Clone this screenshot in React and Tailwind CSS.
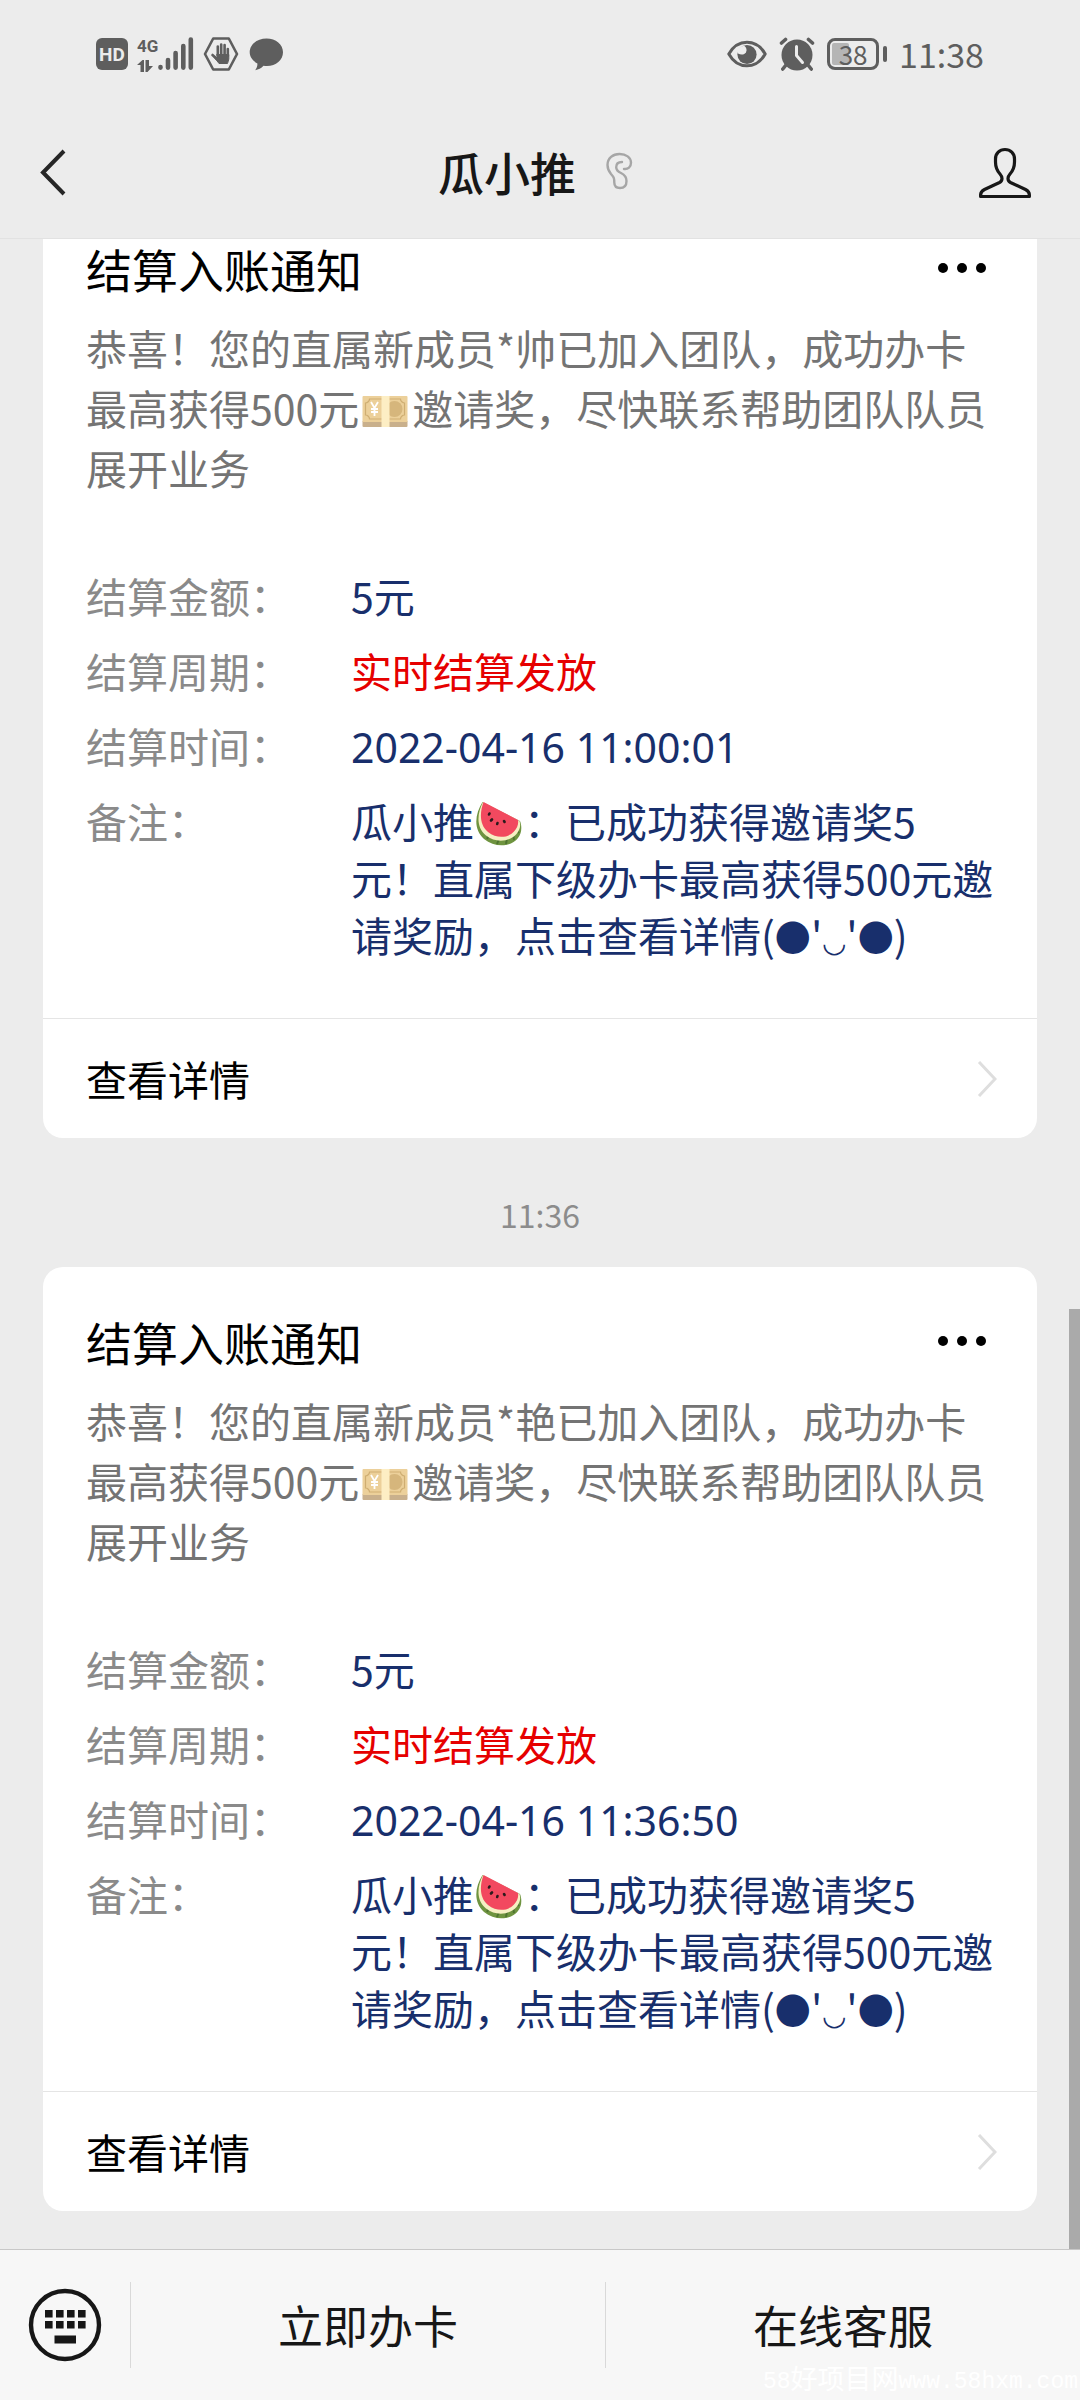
import React from 'react';

const notices = [
  { id: 1, member: '帅', amount: '5元', cycle: '实时结算发放', time: '2022-04-16 11:00:01' },
  { id: 2, member: '艳', amount: '5元', cycle: '实时结算发放', time: '2022-04-16 11:36:50', sentAt: '11:36' },
];

const SignalIcon = () => (
  <svg className="w-9 h-9" viewBox="0 0 36 36" fill="none" stroke="#5e5e5e" strokeWidth="4.6" strokeLinecap="round">
    <path d="M2.5 31v.6M10 24v7.6M17.6 17v14.6M25.3 10v21.6M32.8 3.5v28.1" />
  </svg>
);

const DataArrows = () => (
  <svg className="w-4 h-3" viewBox="0 0 16 12" fill="#5e5e5e">
    <path d="M3.500 12V5H0L5.500 0h1.500v12zM8.500 0H12v6h4l-5.500 6h-2z" />
  </svg>
);

const HandIcon = () => (
  <svg className="w-9 h-9" viewBox="0 0 36 36" fill="none" stroke="#5e5e5e" strokeLinecap="round" strokeLinejoin="round">
    <path strokeWidth="2.600" d="M10.200 2.500h15.600L34 18l-8.200 15.500H10.200L2 18z" />
    <path strokeWidth="2.600" d="M14.800 19V10.500M18.200 18V8.500M21.600 18V9M24.800 20v-7M14 23l-4.500-4" />
    <path fill="#5e5e5e" strokeWidth="1" d="M14 18.500h11.800V23c0 1.800-1 2.700-1.300 4.500h-8.500c-.8-1.500-4-4.500-5.500-7l3.500 1z" />
  </svg>
);

const BubbleIcon = () => (
  <svg className="w-9 h-9" viewBox="0 0 36 36" fill="#5e5e5e">
    <path d="M18.500 2.500C28 2.500 35 8.500 35 16.300S28 30 19 30c-1.200 0-2.400-.1-3.500-.3-2.300 2.500-5 3.800-8.300 4.500 1.500-2 2.300-4 2.200-6.700C4.800 25 1.700 21 1.700 16.300 1.700 8.500 9 2.500 18.500 2.500z" />
  </svg>
);

const EyeIcon = () => (
  <svg className="w-10 h-7" viewBox="0 0 40 28" fill="none">
    <path stroke="#5e5e5e" strokeWidth="3" strokeLinejoin="round" d="M1.800 14C6 6.500 12.500 2.200 20 2.200S34 6.500 38.200 14C34 21.500 27.500 25.800 20 25.800S6 21.500 1.800 14z" />
    <circle cx="20" cy="14.500" r="9.600" fill="#5e5e5e" />
    <path fill="#ececec" d="M17 5.500c2.500 2 3.200 4.500 2 6.800-1.500 2.600-5 3-8 1.200L9 9z" />
  </svg>
);

const AlarmIcon = () => (
  <svg className="w-9 h-9" viewBox="0 0 36 36" fill="none" strokeLinecap="round">
    <circle cx="18" cy="19" r="15.500" fill="#5e5e5e" />
    <path stroke="#5e5e5e" strokeWidth="3.600" d="M2.500 7l4-3.500M33.500 7l-4-3.500M7 29l-3.200 4M29 29l3.200 4" />
    <path stroke="#ececec" strokeWidth="3" strokeLinejoin="round" d="M17.500 10.500v9l6 7" />
  </svg>
);

const StatusBar = () => (
  <div className="flex items-center justify-between h-[108px] pl-24 pr-24 text-[#5e5e5e]">
    <div className="flex items-center gap-[9px]">
      <span className="w-8 h-8 flex items-center justify-center rounded-md bg-[#5e5e5e] text-[#ececec] text-[19px] leading-none font-bold font-['Roboto',sans-serif]">HD</span>
      <div className="flex items-end">
        <div className="w-[21px] h-9 flex flex-col justify-between">
          <span className="text-[17px] leading-5 font-bold font-['Roboto',sans-serif]">4G</span>
          <DataArrows />
        </div>
        <SignalIcon />
      </div>
      <HandIcon />
      <BubbleIcon />
    </div>
    <div className="flex items-center gap-3">
      <EyeIcon />
      <AlarmIcon />
      <div className="flex items-center gap-1">
        <div className="relative flex items-center justify-center w-[52px] h-8 border-[3px] border-[#5e5e5e] rounded-lg">
          <span className="absolute left-0.5 inset-y-0.5 w-[17px] bg-[#b5b5b5] rounded-xs" />
          <span className="relative text-[26px] leading-none">38</span>
        </div>
        <span className="w-1 h-4 rounded-sm bg-[#5e5e5e]" />
      </div>
      <span className="text-[34px] leading-10">11:38</span>
    </div>
  </div>
);

const Header = () => (
  <header className="relative z-10 bg-[#ececec] border-b border-[#e2e2e2]">
    <StatusBar />
    <div className="flex items-center justify-between h-[130px] pl-10 pr-[46px]">
      <button type="button" aria-label="返回" className="w-14 h-14 flex items-center">
        <svg className="w-7 h-12" viewBox="4 0 28 48" fill="none" stroke="#262626" strokeWidth="4">
          <path d="M28 2L7 23.500L28 45" />
        </svg>
      </button>
      <div className="flex items-center gap-7 pb-1">
        <h1 className="text-[46px] leading-[60px] font-medium text-[#171717]">瓜小推</h1>
        <svg className="w-8 h-10" viewBox="0 0 32 40" fill="none" stroke="#a6a6a6" strokeWidth="2.400" strokeLinecap="round">
          <path d="M20 18c4 .5 7-2 7-6.200C27 6.500 22 3 15.500 3S3.500 7 3.500 14c0 4 1.300 6.300 3.500 9 3.200 3.500 3.300 4.500 3.300 8.500 0 3.700 2 5.500 5.700 5.500 4.200 0 6.500-2.500 6.500-7 0-4-2-6.300-5.500-8-3.500-1.600-4.800-3.200-4.800-5.800 0-3.200 2.300-5.200 5.800-5.200" />
        </svg>
      </div>
      <button type="button" aria-label="个人资料" className="w-14 h-14 flex items-center">
        <svg className="w-14 h-14" viewBox="2 0 56 56" fill="none" stroke="#171717" strokeWidth="3.200" strokeLinejoin="round">
          <path d="M29 4.500c-5.500 0-9.500 4-9.500 9.500v3c0 5 1.800 9 4.500 12 1.500 1.700 2 2.500 2 4.500s-.5 3-2.500 4L8.500 44.500C6 45.700 4.600 47.500 4.600 50v1.500H53.400V50c0-2.500-1.400-4.300-3.900-5.500L34.500 37.500c-2-1-2.500-2-2.500-4s.5-2.800 2-4.500c2.700-3 4.500-7 4.500-12v-3c0-5.500-4-9.500-9.500-9.500z" />
        </svg>
      </button>
    </div>
  </header>
);

const YenIcon = () => (
  <svg className="inline-block w-[46px] h-10 ml-[3px] mr-1 align-[-5px]" viewBox="0 0 45 40" role="img" aria-label="日元">
    <path fill="#c9b08c" d="M0 31h45v5a1 1 0 0 1-1 1H1a1 1 0 0 1-1-1z" />
    <rect y="6" width="45" height="26" rx="1" fill="#ecd09a" />
    <path fill="none" stroke="#cfae72" strokeWidth="1.200" d="M7 9h31c0 2 2 4 4 4v12c-2 0-4 2-4 4H7c0-2-2-4-4-4V13c2 0 4-2 4-4z" />
    <circle cx="32" cy="19" r="8" fill="#d6b67c" />
    <rect x="19" y="6" width="8" height="31" fill="#fdeec4" />
    <path fill="none" stroke="#fff" strokeWidth="1.800" d="M8.500 12l3.500 6 3.500-6M12 18v8M8.500 19h7M8.500 22h7" />
  </svg>
);

const MelonIcon = () => (
  <svg className="inline-block w-[46px] h-[46px] mx-0.5 align-[-9px]" viewBox="0 0 46 46" role="img" aria-label="西瓜">
    <path fill="#6f9440" d="M6.500 1C-1 13-3 28 8 38c11 9 27 8 34-1 4-5 4-12 2-17z" />
    <path fill="none" stroke="#4f7430" strokeWidth="2" d="M21 43l2-5M30 43l1-6M38 39l-1-6M43 32l-3-4M11 38l2-4" />
    <path fill="#f6efc3" d="M7 1C1 13 0 26 10 34.500c10 8 24 6 30.500-1.500 3.500-4 4.500-8.500 3-13z" />
    <path fill="#f2495f" d="M7.500 1C3.500 12 3.500 24 12 31c9 7 20 6 26-.500 3.300-3.500 4.700-7.500 4-11.500z" />
    <path fill="none" stroke="#2b1a1c" strokeWidth="2.600" strokeLinecap="round" d="M13.500 12.500l-.5 1M16 18.500l-1 1M21.500 22l-.3 1M28 20l.6 1" />
  </svg>
);

const Row = ({ label, children, valueClass }) => (
  <div className="flex">
    <dt className="w-[265px] shrink-0 text-[#8a8a8a]">{`${label}：`}</dt>
    <dd className={valueClass || 'text-[#182f6c]'}>{children}</dd>
  </div>
);

const NoticeCard = ({ notice }) => (
  <article className="bg-white rounded-[20px]">
    <div className="pt-11 pl-[43px] pr-[42px] pb-[55px]">
      <div className="flex items-center justify-between">
        <h2 className="text-[46px] leading-[60px] text-black">结算入账通知</h2>
        <button type="button" aria-label="更多" className="h-12 flex items-center gap-[9px] pr-[9px]">
          <span className="w-2.5 h-2.5 rounded-full bg-black" />
          <span className="w-2.5 h-2.5 rounded-full bg-black" />
          <span className="w-2.5 h-2.5 rounded-full bg-black" />
        </button>
      </div>
      <p className="mt-[19px] text-[41px] leading-[60px] text-[#747474]">
        {`恭喜！您的直属新成员*${notice.member}已加入团队，成功办卡最高获得500元`}
        <YenIcon />
        邀请奖，尽快联系帮助团队队员展开业务
      </p>
      <dl className="mt-[70px] flex flex-col gap-[18px] text-[41px] leading-[57px]">
        <Row label="结算金额">{notice.amount}</Row>
        <Row label="结算周期" valueClass="text-[#e60000]">{notice.cycle}</Row>
        <Row label="结算时间">
          <time className="leading-none font-['Noto_Sans',sans-serif]">{notice.time}</time>
        </Row>
        <Row label="备注">
          瓜小推
          <MelonIcon />
          ：已成功获得邀请奖5元！直属下级办卡最高获得500元邀请奖励，点击查看详情(
          <span className="text-[36px] leading-none">●</span>'
          <span className="text-[28px] leading-none">◡</span>'
          <span className="text-[36px] leading-none">●</span>)
        </Row>
      </dl>
    </div>
    <a href="#detail" className="flex items-center justify-between h-[120px] pl-[43px] pr-10 border-t border-[#e5e5e5] text-[41px] text-black">
      查看详情
      <svg className="w-5 h-9" viewBox="0 0 20 36" fill="none" stroke="#dedede" strokeWidth="3">
        <path d="M2 1l16 17L2 35" />
      </svg>
    </a>
  </article>
);

const KeyboardIcon = () => (
  <svg className="w-[74px] h-[74px]" viewBox="0 0 74 74" fill="#171717">
    <circle cx="37" cy="37" r="34" fill="none" stroke="#171717" strokeWidth="4.400" />
    <path d="M17 22h7.600v7.500H17zM28 22h7.600v7.500H28zM39 22h7.600v7.500H39zM50 22h7.600v7.500H50zM17 33h7.600v7.500H17zM28 33h7.600v7.500H28zM39 33h7.600v7.500H39zM50 33h7.600v7.500H50zM26.500 47.500h21.500v8H26.500z" />
  </svg>
);

const MenuBar = () => (
  <footer className="relative flex items-center h-[151px] bg-[#f7f7f7] border-t border-[#c8c8c8] text-[45px] text-[#171717]">
    <button type="button" aria-label="键盘" className="w-[130px] shrink-0 flex justify-center">
      <KeyboardIcon />
    </button>
    <button type="button" className="flex-1 h-[86px] border-l border-[#d9d9d9]">立即办卡</button>
    <button type="button" className="flex-1 h-[86px] border-l border-[#d9d9d9]">在线客服</button>
    <span className="absolute right-0.5 bottom-0 flex items-center leading-9 text-white font-['Liberation_Mono','Noto_Sans_CJK_SC',monospace] text-[23px]">
      58<span className="text-[27px]">好项目网</span>www.58hxm.com
    </span>
  </footer>
);

const App = () => (
  <div className="h-screen flex flex-col bg-[#ececec] font-['Noto_Sans_CJK_SC',sans-serif]">
    <Header />
    <main className="relative flex-1 min-h-0 overflow-hidden flex flex-col justify-end px-[43px] pb-[38px]">
      {notices.map((notice) => (
        <React.Fragment key={notice.id}>
          {notice.sentAt && (
            <time className="pt-14 pb-[33px] text-center text-[32px] leading-10 text-[#8c8c8c]">{notice.sentAt}</time>
          )}
          <NoticeCard notice={notice} />
        </React.Fragment>
      ))}
      <span className="absolute right-0 bottom-0 w-[11px] h-[940px] bg-[#aaaaaa]" />
    </main>
    <MenuBar />
  </div>
);

export default App;
